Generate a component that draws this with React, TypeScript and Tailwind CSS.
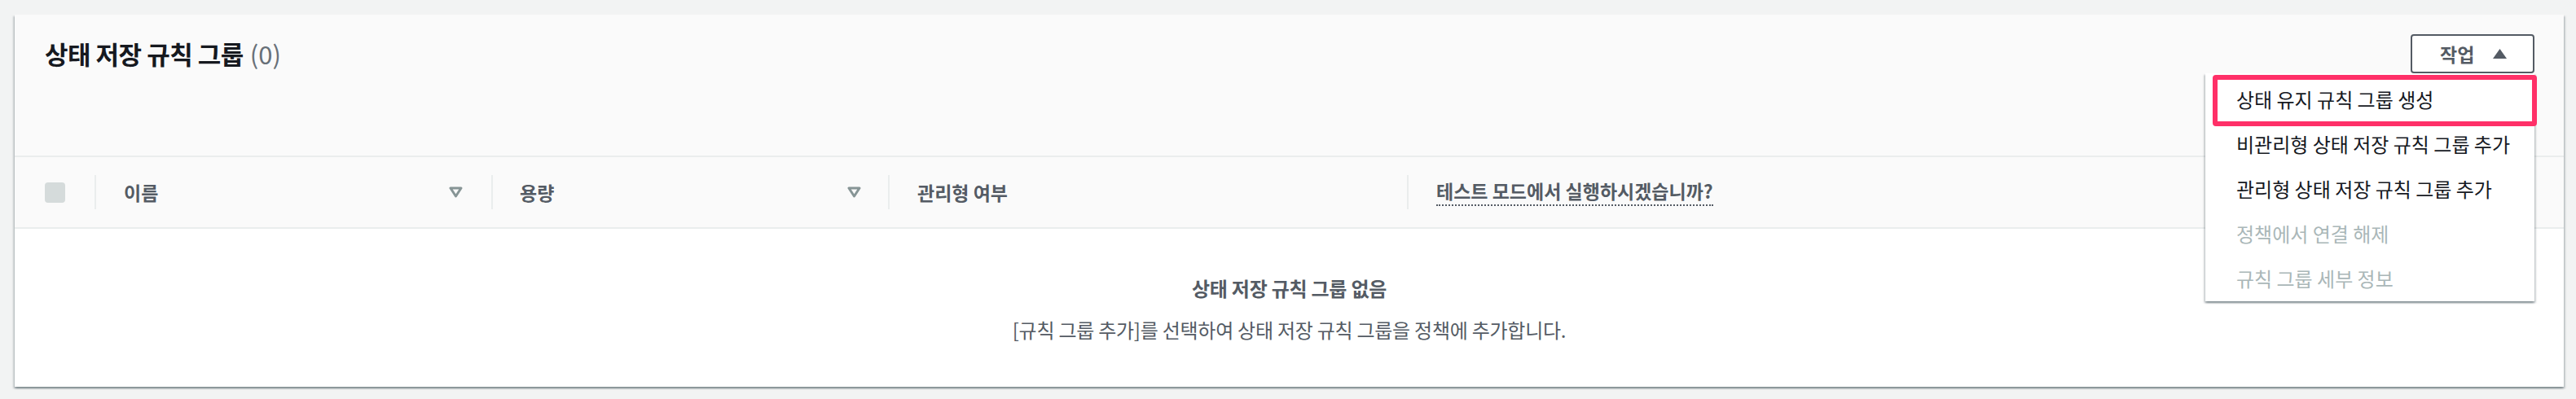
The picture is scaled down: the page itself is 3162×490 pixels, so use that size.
const SortIcon = () => (
  <svg width="17" height="14" viewBox="0 0 17 14" className="shrink-0">
    <polygon points="2,2 15,2 8.5,12" fill="none" stroke="#879596" strokeWidth="3" strokeLinejoin="round" />
  </svg>
);

const menuItems = [
  { label: "상태 유지 규칙 그룹 생성", disabled: false },
  { label: "비관리형 상태 저장 규칙 그룹 추가", disabled: false },
  { label: "관리형 상태 저장 규칙 그룹 추가", disabled: false },
  { label: "정책에서 연결 해제", disabled: true },
  { label: "규칙 그룹 세부 정보", disabled: true },
];

const App = () => {
  return (
    <div
      className="min-h-[490px] bg-[#f2f3f3] pl-[18px] pr-[15px] pt-[18px] pb-[14px]"
      style={{ fontFamily: '"Noto Sans CJK KR", "Noto Sans", sans-serif' }}
    >
      <div className="relative bg-white shadow-[0_2px_2px_0_rgba(0,28,36,0.3),2px_2px_2px_0_rgba(0,28,36,0.15),-2px_2px_2px_0_rgba(0,28,36,0.15)]">
        {/* header */}
        <div className="flex h-[175px] items-start justify-between border-b-2 border-[#eaeded] bg-[#fafafa] pl-[37px] pr-[36px] pt-[24px]">
          <h2 className="flex h-[48px] items-center text-[31px] font-bold tracking-[-0.5px] text-[#16191f]">
            상태 저장 규칙 그룹
            <span className="ml-[8px] font-normal tracking-normal text-[#687078]">(0)</span>
          </h2>
          <div className="relative">
            <button className="flex h-[48px] w-[152px] items-center justify-between rounded-[4px] border-2 border-[#545b64] bg-white pl-[34px] pr-[32px] text-[23px] font-bold text-[#545b64]">
              작업
              <svg width="17" height="12" viewBox="0 0 17 12">
                <polygon points="8.5,0 17,12 0,12" fill="#545b64" />
              </svg>
            </button>
            {/* dropdown */}
            <div className="absolute right-0 top-[48px] z-10 w-[404px] bg-white pt-[4px] pb-[1px] shadow-[0_2px_2px_0_rgba(0,28,36,0.3),2px_2px_2px_0_rgba(0,28,36,0.15),-2px_2px_2px_0_rgba(0,28,36,0.15)]">
              {menuItems.map((item) => (
                <div
                  key={item.label}
                  className={`flex h-[55px] items-center pl-[38px] text-[24px] ${
                    item.disabled ? "text-[#aab7b8]" : "text-[#16191f]"
                  }`}
                >
                  {item.label}
                </div>
              ))}
              <div className="absolute left-[9px] right-[-3px] top-[2px] h-[63px] rounded-[4px] border-[6px] border-[#ff3068]" />
            </div>
          </div>
        </div>

        {/* table header */}
        <div className="flex h-[88px] items-center border-b-2 border-[#eaeded] bg-[#fafafa] text-[23px] font-bold text-[#545b64]">
          <div className="flex w-[98px] items-center pl-[37px]">
            <div className="h-[25px] w-[25px] rounded-[4px] bg-[#d5dbdb]" />
          </div>
          <div className="flex h-[42px] w-[487px] items-center justify-between border-l-2 border-[#eaeded] pl-[34px] pr-[35px]">
            <span>이름</span>
            <SortIcon />
          </div>
          <div className="flex h-[42px] w-[487px] items-center justify-between border-l-2 border-[#eaeded] pl-[33px] pr-[33px]">
            <span>용량</span>
            <SortIcon />
          </div>
          <div className="flex h-[42px] w-[637px] items-center border-l-2 border-[#eaeded] pl-[34px]">
            <span>관리형 여부</span>
          </div>
          <div className="flex h-[42px] flex-1 items-center border-l-2 border-[#eaeded] pl-[34px]">
            <span className="border-b-2 border-dotted border-[#545b64] pb-[2px] leading-[30px]">
              테스트 모드에서 실행하시겠습니까?
            </span>
          </div>
        </div>

        {/* empty state */}
        <div className="flex flex-col items-center pt-[58px] pb-[55px] text-[24px] tracking-[-0.25px] text-[#545b64]">
          <p className="font-bold leading-[30px]">상태 저장 규칙 그룹 없음</p>
          <p className="mt-[21px] leading-[30px]">
            [규칙 그룹 추가]를 선택하여 상태 저장 규칙 그룹을 정책에 추가합니다.
          </p>
        </div>
      </div>
    </div>
  );
};

export default App;
